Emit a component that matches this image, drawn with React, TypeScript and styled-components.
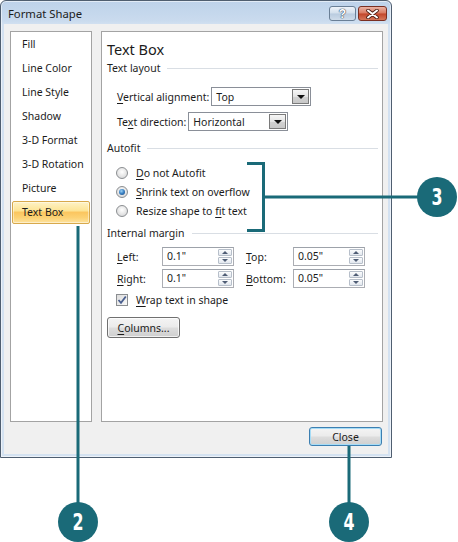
import React from "react";
import styled, { createGlobalStyle, css } from "styled-components";

const Global = createGlobalStyle`
  html, body { margin: 0; padding: 0; background: #ffffff; }
  #root { width: 458px; height: 542px; }
  * { box-sizing: border-box; }
`;

const UI_FONT = `"Segoe UI", "Noto Sans", "Open Sans", sans-serif`;
const TEAL = "#1a6a78";

const Page = styled.div`
  position: relative;
  width: 458px;
  height: 542px;
  overflow: hidden;
  background: #ffffff;
  font-family: ${UI_FONT};
  font-size: 10.5px;
  color: #1b1b1b;
`;

const Window = styled.div`
  width: 392px;
  height: 458px;
  border: 1px solid #4f5e70;
  border-radius: 6px 6px 0 0;
  background: linear-gradient(#bdd2ea 0px, #cadbee 20px, #d3e1f1 24px, #d4e2f1 100%);
  padding: 0 3px 3px;
  display: flex;
  flex-direction: column;
  box-shadow: inset 0 0 0 1px rgba(255, 255, 255, 0.55);
`;

const TitleBar = styled.div`
  height: 23px;
  margin: 0 -3px;
  padding: 5px 4px 0 7px;
  display: flex;
  align-items: flex-start;
`;

const Title = styled.div`
  flex: 1;
  font-size: 11.3px;
  line-height: 16px;
  color: #1c1c1c;
`;

const CaptionButton = styled.div<{ $kind: "help" | "close" }>`
  height: 15px;
  border-radius: 3px;
  display: flex;
  align-items: center;
  justify-content: center;
  ${(p) =>
    p.$kind === "help"
      ? css`
          width: 27px;
          margin-right: 2px;
          border: 1px solid #6a7f96;
          background: linear-gradient(#eef3f9 0%, #d2dfec 48%, #b9cbdf 52%, #cfdcea 100%);
        `
      : css`
          width: 29px;
          border: 1px solid #7a2f22;
          background: linear-gradient(#eab3a4 0%, #d9785f 48%, #c2452a 52%, #d5775a 100%);
        `}
`;

const HelpGlyph = styled.span`
  font-family: "Liberation Sans", Arial, sans-serif;
  font-weight: bold;
  font-size: 12px;
  line-height: 12px;
  color: #ffffff;
  text-shadow: 0 0 1px #3d4c5e, 0 0 1px #3d4c5e, 0 0 1px #3d4c5e;
`;

const Client = styled.div`
  flex: 1;
  background: #f0f0f0;
  padding: 7px 5px 0 6px;
  display: flex;
  flex-direction: column;
`;

const PanelsRow = styled.div`
  height: 391px;
  display: flex;
  gap: 9px;
`;

const NavPanel = styled.div`
  width: 82px;
  border: 1px solid #a3a3a3;
  background: #ffffff;
  padding: 1px;
  display: flex;
  flex-direction: column;
  gap: 1px;
`;

const NavItem = styled.div<{ $selected?: boolean }>`
  height: 23px;
  line-height: 21px;
  padding-left: 9px;
  border: 1px solid transparent;
  border-radius: 2px;
  white-space: nowrap;
  color: #1b1b1b;
  ${(p) =>
    p.$selected &&
    css`
      border-color: #d8a94c;
      background: linear-gradient(#fef2c6 0%, #fde597 40%, #fbc660 50%, #fcd274 75%, #fde3a0 100%);
      box-shadow: inset 0 0 0 1px rgba(255, 255, 255, 0.45);
    `}
`;

const ContentPanel = styled.div`
  width: 282px;
  border: 1px solid #a3a3a3;
  background: #ffffff;
  padding: 7px 4px 0 5px;
  display: flex;
  flex-direction: column;
`;

const Heading = styled.div`
  font-size: 14.5px;
  line-height: 20px;
  height: 20px;
  color: #1b1b1b;
`;

const SectionHeader = styled.div<{ $mt: number }>`
  margin-top: ${(p) => p.$mt}px;
  height: 14px;
  line-height: 14px;
  display: flex;
  align-items: center;
  gap: 7px;
  color: #1e1e1e;
  &::after {
    content: "";
    flex: 1;
    height: 1px;
    background: #d9dee4;
  }
`;

const Indented = styled.div<{ $mt: number }>`
  margin-top: ${(p) => p.$mt}px;
  padding-left: 9px;
  display: flex;
  flex-direction: column;
`;

const FieldRow = styled.div<{ $mt?: number }>`
  margin-top: ${(p) => p.$mt ?? 0}px;
  height: 19px;
  display: flex;
  align-items: center;
  gap: 2px;
  white-space: nowrap;
`;

const Label = styled.span`
  padding-left: 1px;
  white-space: nowrap;
`;

const Key = styled.span`
  text-decoration: underline;
  text-underline-offset: 2px;
`;

const Combo = styled.div`
  width: 100px;
  height: 19px;
  border: 1px solid #8a8f98;
  background: #ffffff;
  display: flex;
  align-items: center;
  padding: 1px;
`;

const ComboText = styled.span`
  flex: 1;
  padding-left: 3px;
`;

const ComboArrow = styled.div`
  width: 17px;
  height: 15px;
  border: 1px solid #7a7a7a;
  background: linear-gradient(#f6f6f6 0%, #e4e4e4 50%, #d2d2d2 51%, #c8c8c8 100%);
  display: flex;
  align-items: center;
  justify-content: center;
  &::before {
    content: "";
    border-left: 4px solid transparent;
    border-right: 4px solid transparent;
    border-top: 4px solid #111111;
  }
`;

const OptionRow = styled.div`
  height: 19px;
  display: flex;
  align-items: center;
  gap: 8px;
  white-space: nowrap;
`;

const Radio = styled.span<{ $checked?: boolean }>`
  width: 12px;
  height: 12px;
  border-radius: 50%;
  border: 1px solid #8b8e91;
  background: radial-gradient(circle at 50% 40%, #ffffff 0%, #eaeaea 45%, #cfd0d2 100%);
  display: flex;
  align-items: center;
  justify-content: center;
  ${(p) =>
    p.$checked &&
    css`
      &::after {
        content: "";
        width: 6px;
        height: 6px;
        border-radius: 50%;
        background: radial-gradient(circle at 40% 35%, #9fd2f5 0%, #3d85c6 45%, #173f78 100%);
      }
    `}
`;

const MarginGrid = styled.div`
  margin-top: 7px;
  padding-left: 9px;
  display: grid;
  grid-template-columns: 46px 83px 48px 72px;
  grid-auto-rows: 19px;
  row-gap: 3px;
  align-items: center;
`;

const Spin = styled.div`
  width: 72px;
  height: 19px;
  border: 1px solid #abadb3;
  border-top-color: #9da2aa;
  background: #ffffff;
  display: flex;
  align-items: stretch;
  padding: 1px;
`;

const SpinText = styled.span`
  flex: 1;
  line-height: 15px;
  padding-left: 3px;
`;

const SpinButtons = styled.div`
  width: 14px;
  display: flex;
  flex-direction: column;
  gap: 1px;
`;

const SpinButton = styled.div<{ $dir: "up" | "down" }>`
  flex: 1;
  border: 1px solid #b7bfca;
  border-radius: 1px;
  background: linear-gradient(#fbfcfd, #e2e7ee);
  display: flex;
  align-items: center;
  justify-content: center;
  &::before {
    content: "";
    border-left: 3px solid transparent;
    border-right: 3px solid transparent;
    ${(p) =>
      p.$dir === "up"
        ? css`border-bottom: 3px solid #4f5d75;`
        : css`border-top: 3px solid #4f5d75;`}
  }
`;

const CheckRow = styled.div`
  margin-top: 3px;
  padding-left: 9px;
  height: 17px;
  display: flex;
  align-items: center;
  gap: 8px;
`;

const CheckBox = styled.span`
  width: 12px;
  height: 12px;
  border: 1px solid #8b8e91;
  background: linear-gradient(135deg, #dcdcdc, #fafafa);
  display: flex;
  align-items: center;
  justify-content: center;
`;

const PushButton = styled.div<{ $default?: boolean; $width: number; $height: number }>`
  width: ${(p) => p.$width}px;
  height: ${(p) => p.$height}px;
  border: 1px solid #707070;
  border-radius: 3px;
  background: linear-gradient(#f4f4f4 0%, #ebebeb 48%, #dddddd 52%, #cfcfcf 100%);
  box-shadow: inset 0 0 0 1px rgba(255, 255, 255, 0.7);
  display: flex;
  align-items: center;
  justify-content: center;
  color: #1b1b1b;
  ${(p) =>
    p.$default &&
    css`
      border-color: #3c7fb1;
      box-shadow: inset 0 0 0 1px #a6dcf6;
    `}
`;

const ColumnsWrap = styled.div`
  margin-top: 9px;
`;

const Footer = styled.div`
  display: flex;
  justify-content: flex-end;
  padding: 5px 1px 0 0;
`;

const Callouts = styled.svg`
  position: absolute;
  left: 0;
  top: 0;
  pointer-events: none;
`;

const CalloutNumber = styled.text`
  font-family: "Liberation Sans Narrow", "DejaVu Sans Condensed", "Liberation Sans", sans-serif;
  font-weight: bold;
  font-size: 22px;
  fill: #ffffff;
`;

const navItems = ["Fill", "Line Color", "Line Style", "Shadow", "3-D Format", "3-D Rotation", "Picture", "Text Box"];

const Bubble: React.FC<{ cx: number; cy: number; n: string }> = ({ cx, cy, n }) => (
  <g>
    <circle cx={cx} cy={cy} r={20} fill={TEAL} />
    <g transform={`translate(${cx} ${cy + 8}) scale(0.8 1.05)`}>
      <CalloutNumber x={0} y={0} textAnchor="middle">
        {n}
      </CalloutNumber>
    </g>
  </g>
);

const Spinner: React.FC<{ value: string }> = ({ value }) => (
  <Spin>
    <SpinText>{value}</SpinText>
    <SpinButtons>
      <SpinButton $dir="up" />
      <SpinButton $dir="down" />
    </SpinButtons>
  </Spin>
);

export default function App() {
  return (
    <Page>
      <Global />
      <Window>
        <TitleBar>
          <Title>Format Shape</Title>
          <CaptionButton $kind="help">
            <HelpGlyph>?</HelpGlyph>
          </CaptionButton>
          <CaptionButton $kind="close">
            <svg width="13" height="10" viewBox="0 0 13 10">
              <path d="M2 1.5 L11 8.5 M11 1.5 L2 8.5" stroke="#4a1c14" strokeWidth="3.6" strokeLinecap="round" />
              <path d="M2 1.5 L11 8.5 M11 1.5 L2 8.5" stroke="#ffffff" strokeWidth="2" strokeLinecap="round" />
            </svg>
          </CaptionButton>
        </TitleBar>
        <Client>
          <PanelsRow>
            <NavPanel>
              {navItems.map((it) => (
                <NavItem key={it} $selected={it === "Text Box"}>
                  {it}
                </NavItem>
              ))}
            </NavPanel>
            <ContentPanel>
              <Heading>Text Box</Heading>
              <SectionHeader $mt={2}>Text layout</SectionHeader>
              <Indented $mt={12}>
                <FieldRow>
                  <Label>
                    <Key>V</Key>ertical alignment:
                  </Label>
                  <Combo>
                    <ComboText>Top</ComboText>
                    <ComboArrow />
                  </Combo>
                </FieldRow>
                <FieldRow $mt={6}>
                  <Label>
                    Te<Key>x</Key>t direction:
                  </Label>
                  <Combo>
                    <ComboText>Horizontal</ComboText>
                    <ComboArrow />
                  </Combo>
                </FieldRow>
              </Indented>
              <SectionHeader $mt={10}>Autofit</SectionHeader>
              <Indented $mt={8}>
                <OptionRow>
                  <Radio />
                  <span>
                    <Key>D</Key>o not Autofit
                  </span>
                </OptionRow>
                <OptionRow>
                  <Radio $checked />
                  <span>
                    <Key>S</Key>hrink text on overflow
                  </span>
                </OptionRow>
                <OptionRow>
                  <Radio />
                  <span>
                    Resize shape to <Key>f</Key>it text
                  </span>
                </OptionRow>
              </Indented>
              <SectionHeader $mt={6}>Internal margin</SectionHeader>
              <MarginGrid>
                <Label>
                  <Key>L</Key>eft:
                </Label>
                <Spinner value={'0.1"'} />
                <Label>
                  <Key>T</Key>op:
                </Label>
                <Spinner value={'0.05"'} />
                <Label>
                  <Key>R</Key>ight:
                </Label>
                <Spinner value={'0.1"'} />
                <Label>
                  <Key>B</Key>ottom:
                </Label>
                <Spinner value={'0.05"'} />
              </MarginGrid>
              <CheckRow>
                <CheckBox>
                  <svg width="10" height="10" viewBox="0 0 10 10">
                    <path d="M1.5 5 L4 7.8 L8.8 1.5" stroke="#4a5f8f" strokeWidth="1.8" fill="none" />
                  </svg>
                </CheckBox>
                <span>
                  <Key>W</Key>rap text in shape
                </span>
              </CheckRow>
              <ColumnsWrap>
                <PushButton $width={73} $height={21}>
                  <span>
                    <Key>C</Key>olumns...
                  </span>
                </PushButton>
              </ColumnsWrap>
            </ContentPanel>
          </PanelsRow>
          <Footer>
            <PushButton $default $width={73} $height={19}>
              Close
            </PushButton>
          </Footer>
        </Client>
      </Window>
      <Callouts width={458} height={542} viewBox="0 0 458 542">
        <g stroke={TEAL} strokeWidth={3} fill="none">
          <path d="M78 226 V505" />
          <path d="M349 446 V505" />
          <path d="M247 163.5 H263.5 V230.5 H247" />
          <path d="M263.5 197 H420" />
        </g>
        <Bubble cx={78} cy={522} n="2" />
        <Bubble cx={437} cy={197} n="3" />
        <Bubble cx={349} cy={522} n="4" />
      </Callouts>
    </Page>
  );
}
